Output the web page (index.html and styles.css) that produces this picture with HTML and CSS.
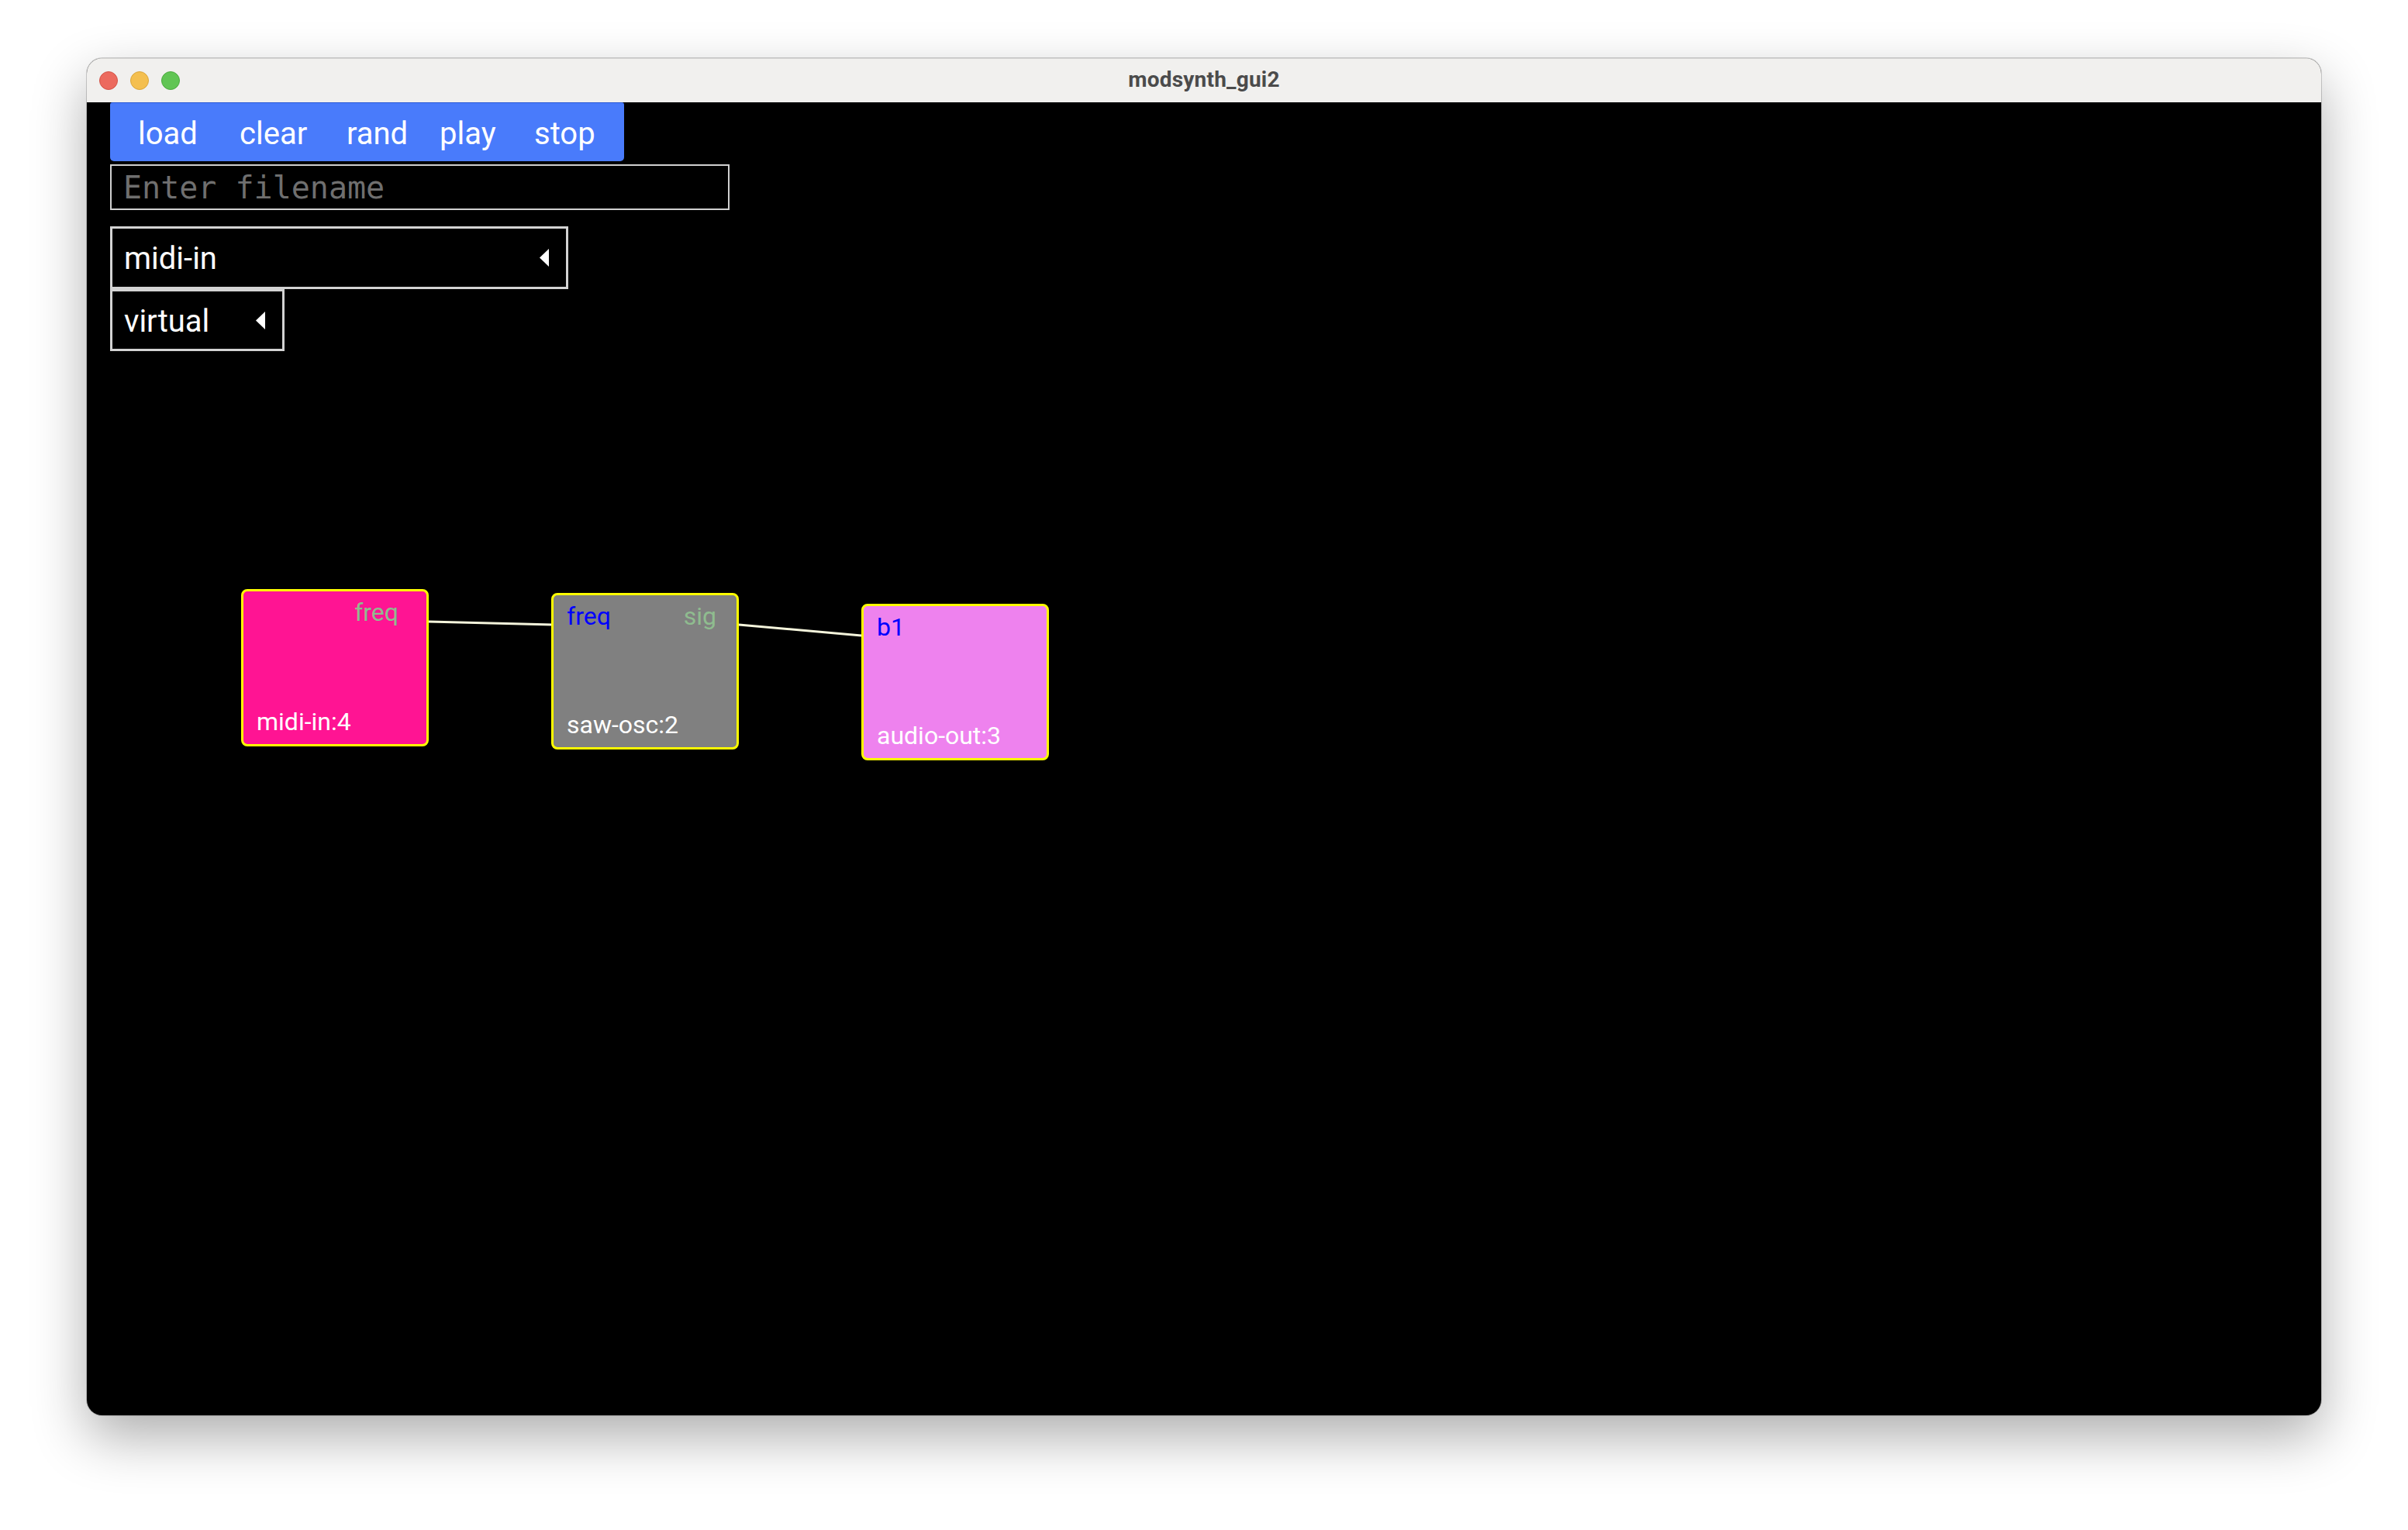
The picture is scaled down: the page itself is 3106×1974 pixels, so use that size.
FILE: index.html
```html
<!DOCTYPE html>
<html lang="en">
<head>
<meta charset="utf-8">
<title>modsynth_gui2</title>
<link rel="stylesheet" href="styles.css">
</head>
<body>
<div class="window">
  <div class="titlebar">
    <div class="lights">
      <span class="light red"></span>
      <span class="light yellow"></span>
      <span class="light green"></span>
    </div>
    <div class="title">modsynth_gui2</div>
  </div>
  <div class="content">
    <div class="toolbar">
      <button class="btn btn-load">load</button>
      <button class="btn btn-clear">clear</button>
      <button class="btn btn-rand">rand</button>
      <button class="btn btn-play">play</button>
      <button class="btn btn-stop">stop</button>
    </div>
    <input class="filename" type="text" placeholder="Enter filename">
    <div class="select select-module">
      <span class="select-label">midi-in</span>
      <svg class="caret" width="12" height="23" viewBox="0 0 12 23"><polygon points="12,0 12,23 0,11.5" fill="#ffffff"/></svg>
    </div>
    <div class="select select-port">
      <span class="select-label">virtual</span>
      <svg class="caret" width="12" height="23" viewBox="0 0 12 23"><polygon points="12,0 12,23 0,11.5" fill="#ffffff"/></svg>
    </div>

    <svg class="wires" width="2882" height="1694" viewBox="0 0 2882 1694">
      <line x1="441" y1="670" x2="601" y2="674" stroke="#f5f5dc" stroke-width="3"/>
      <line x1="841" y1="674" x2="999" y2="688" stroke="#f5f5dc" stroke-width="3"/>
    </svg>

    <div class="node node-midi">
      <div class="ports ports-midi">
        <span class="port-in"></span>
        <span class="port-out">freq</span>
      </div>
      <div class="node-name">midi-in:4</div>
    </div>
    <div class="node node-saw">
      <div class="ports ports-saw">
        <span class="port-in">freq</span>
        <span class="port-out">sig</span>
      </div>
      <div class="node-name">saw-osc:2</div>
    </div>
    <div class="node node-out">
      <div class="ports">
        <span class="port-in">b1</span>
        <span class="port-out"></span>
      </div>
      <div class="node-name">audio-out:3</div>
    </div>
  </div>
</div>
</body>
</html>
```

FILE: styles.css
```css
* { box-sizing: border-box; }

html, body {
  margin: 0;
  padding: 0;
  background: #ffffff;
}

body {
  width: 3106px;
  height: 1974px;
  padding: 75px 0 0 112px;
  font-family: Roboto, "Liberation Sans", sans-serif;
}

.window {
  width: 2882px;
  height: 1751px;
  border-radius: 20px;
  overflow: hidden;
  background: #000000;
  box-shadow: 0 28px 70px rgba(0, 0, 0, 0.32), 0 0 0 1px rgba(0, 0, 0, 0.18);
  display: flex;
  flex-direction: column;
}

.titlebar {
  height: 57px;
  flex: none;
  background: #f1f0ee;
  border-top: 1px solid #d6d5d3;
  display: flex;
  align-items: center;
  position: relative;
}

.lights {
  display: flex;
  gap: 16px;
  padding-left: 16px;
}

.light {
  width: 24px;
  height: 24px;
  border-radius: 50%;
  display: block;
}
.red { background: #ec6a5e; border: 1px solid #d25448; }
.yellow { background: #f4bf4f; border: 1px solid #d9a53b; }
.green { background: #61c554; border: 1px solid #4ca93f; }

.title {
  position: absolute;
  left: 0;
  right: 0;
  top: 10px;
  text-align: center;
  font-family: Roboto, "Liberation Sans", sans-serif;
  font-weight: 700;
  font-size: 28px;
  line-height: 33px;
  color: #4b4b4b;
  letter-spacing: 0.2px;
}

.content {
  flex: 1;
  position: relative;
  padding-left: 30px;
  display: flex;
  flex-direction: column;
  align-items: flex-start;
}

.toolbar {
  display: flex;
  width: 663px;
  height: 76px;
  background: #497bfb;
  border-top: 1px solid #2a5ad6;
  border-radius: 3px 3px 5px 5px;
}

.btn {
  background: none;
  border: none;
  margin: 0;
  padding: 16px 0 12px;
  font-family: Roboto, "Liberation Sans", sans-serif;
  font-size: 40px;
  line-height: 47px;
  color: #ffffff;
  text-align: left;
  flex: none;
}
.btn-load { width: 138px; padding-left: 36px; }
.btn-clear { width: 140px; padding-left: 29px; }
.btn-rand { width: 125px; padding-left: 27px; }
.btn-play { width: 118px; padding-left: 22px; }
.btn-stop { width: 142px; padding-left: 26px; }

.filename {
  margin-top: 4px;
  width: 799px;
  height: 59px;
  background: #000000;
  border: 2px solid #d0d0d0;
  padding: 0 0 0 15px;
  font-family: "DejaVu Sans Mono", "Liberation Mono", monospace;
  font-size: 40px;
  color: #dddddd;
  outline: none;
}
.filename::placeholder { color: #6f6f6f; }

.select {
  display: flex;
  align-items: center;
  justify-content: space-between;
  border: 3px solid #d3d3d3;
  padding: 0 22px 0 15px;
  font-family: Roboto, "Liberation Sans", sans-serif;
  font-size: 40px;
  line-height: 47px;
  color: #ffffff;
}
.select-label { position: relative; top: 1px; }
.select-module { margin-top: 21px; width: 591px; height: 81px; }
.select-port { width: 225px; height: 80px; }
.caret { display: block; flex: none; }

.wires {
  position: absolute;
  left: 0;
  top: 0;
  pointer-events: none;
}

.node {
  position: absolute;
  width: 242px;
  height: 202px;
  border: 3px solid #ffff00;
  border-radius: 8px;
  display: flex;
  flex-direction: column;
  justify-content: space-between;
  padding: 8px 0 10px 17px;
  font-family: Roboto, "Liberation Sans", sans-serif;
  font-size: 32px;
  line-height: 38px;
}
.node-midi { left: 199px; top: 628px; height: 203px; background: #ff1493; }
.node-saw { left: 599px; top: 633px; background: #808080; }
.node-out { left: 999px; top: 647px; background: #ee82ee; }

.ports {
  display: flex;
  justify-content: space-between;
  padding-right: 26px;
}
.ports-midi { padding-right: 36px; }
.ports-saw { padding-right: 26px; }

.port-in { color: #0000ff; }
.port-out { color: #8fbc8f; }

.node-name { color: #ffffff; }
```
